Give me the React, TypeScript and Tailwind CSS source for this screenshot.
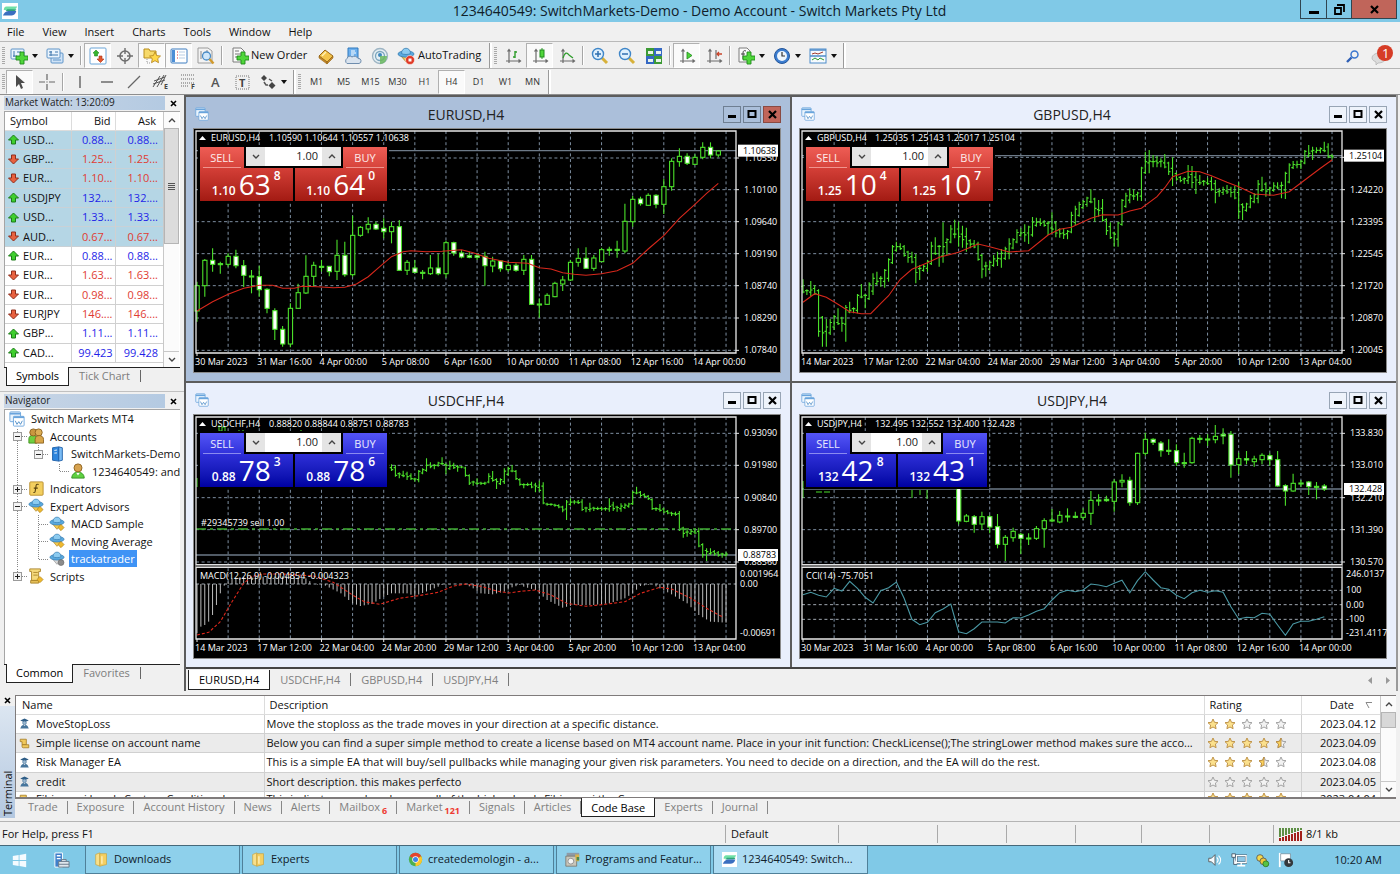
import { useState } from 'react'
import type { ReactNode } from 'react'

type Pt = [number, number]
// high, low, body top, body bottom, filled (1) or hollow (0)
type Candle = [number, number, number, number, number]

const STEP = 7.78
const LEFT = 4

const EURUSD_CANDLES: Candle[] = [
  [560, 680, 572, 648, 0], [492, 605, 496, 572, 0], [460, 530, 496, 508, 1], [500, 536, 506, 509, 1],
  [475, 515, 484, 508, 0], [464, 520, 484, 512, 1], [495, 576, 512, 541, 1], [525, 595, 543, 546, 1],
  [512, 605, 545, 584, 1], [580, 655, 583, 640, 1], [640, 735, 647, 703, 1], [693, 755, 703, 747, 1],
  [625, 757, 640, 747, 0], [566, 640, 593, 640, 0], [481, 597, 544, 594, 0], [500, 575, 511, 544, 0],
  [495, 530, 514, 517, 1], [513, 544, 514, 530, 1], [434, 555, 481, 529, 0], [440, 545, 481, 539, 1],
  [362, 545, 421, 539, 0], [393, 425, 397, 421, 0], [367, 415, 388, 402, 0], [380, 405, 388, 402, 1],
  [370, 430, 400, 410, 1], [380, 445, 395, 410, 0], [375, 527, 395, 526, 1], [495, 540, 502, 526, 0],
  [495, 535, 519, 532, 1], [525, 553, 532, 535, 1], [480, 540, 519, 536, 0], [477, 541, 519, 536, 1],
  [437, 548, 443, 536, 0], [440, 482, 443, 474, 1], [465, 490, 474, 486, 1], [470, 490, 482, 487, 1],
  [475, 495, 482, 487, 1], [470, 572, 484, 512, 1], [485, 532, 498, 513, 0], [495, 530, 498, 521, 1],
  [500, 530, 511, 524, 0], [505, 530, 511, 526, 1], [480, 540, 493, 526, 0], [480, 630, 493, 628, 1],
  [610, 668, 627, 630, 1], [595, 630, 601, 628, 0], [560, 607, 565, 605, 0], [543, 588, 555, 567, 0],
  [495, 558, 502, 555, 0], [460, 515, 490, 502, 0], [457, 522, 490, 520, 1], [480, 527, 489, 520, 0],
  [458, 500, 464, 500, 0], [455, 482, 463, 466, 1], [437, 488, 463, 466, 1], [326, 475, 379, 468, 0],
  [303, 395, 313, 380, 0], [305, 332, 312, 326, 1], [295, 332, 301, 331, 0], [298, 340, 301, 328, 1],
  [252, 357, 275, 328, 0], [190, 287, 199, 275, 0], [160, 215, 184, 200, 0], [175, 210, 184, 205, 1],
  [178, 210, 187, 208, 0], [142, 193, 157, 187, 0], [142, 190, 157, 180, 1], [165, 187, 168, 180, 0],
]

const EURUSD_MA: Pt[] = [
  [0, 648], [2, 620], [4, 598], [6, 580], [8, 571], [9.7, 571], [11, 580], [12.5, 580], [13.5, 574], [15.5, 575],
  [17.5, 578], [19, 577], [20.5, 567], [22, 545], [23.5, 515], [25, 485], [26.5, 470], [27.5, 467], [29.5, 470],
  [31.5, 469], [34, 464], [35.5, 473], [37.5, 490], [40, 502], [42.5, 505], [44, 518], [45.5, 522], [47, 533],
  [48.5, 538], [50, 541], [52, 536], [54, 527], [56, 505], [58, 462], [60, 422], [62, 370], [64, 328], [65.5, 295], [67, 265],
]

const GBPUSD_BARS: Pt[] = [
  [553, 595], [583, 600], [558, 603], [570, 600], [583, 725], [663, 755], [672, 755], [672, 720], [660, 705], [640, 690],
  [665, 710], [630, 740], [620, 655], [637, 655], [597, 655], [567, 610], [597, 640], [562, 615], [535, 600], [530, 570],
  [543, 575], [522, 578], [490, 560], [450, 507], [440, 470], [445, 465], [450, 485], [467, 503], [470, 505], [477, 565],
  [510, 555], [510, 530], [495, 530], [440, 510], [427, 480], [450, 515], [382, 503], [430, 480], [390, 445], [374, 430],
  [380, 455], [392, 458], [398, 470], [433, 460], [435, 460], [440, 497], [477, 550], [500, 545], [498, 527], [480, 515],
  [470, 513], [462, 518], [455, 495], [430, 493], [430, 463], [403, 445], [400, 425], [388, 440], [392, 447], [366, 425],
  [368, 395], [370, 393], [375, 395], [378, 420], [352, 415], [378, 427], [400, 428], [400, 432], [405, 433], [350, 415],
  [332, 390], [320, 365], [315, 342], [305, 335], [283, 325], [308, 380], [315, 365], [312, 380], [370, 420], [382, 432],
  [410, 455], [380, 455], [312, 392], [293, 338], [280, 325], [283, 315], [290, 317], [215, 318], [170, 237], [165, 235],
  [180, 217], [183, 217], [190, 217], [177, 220], [200, 240], [187, 273], [232, 257], [243, 262], [247, 267], [210, 267],
  [213, 280], [228, 297], [240, 270], [255, 272], [248, 270], [245, 287], [255, 325], [280, 305], [275, 300], [270, 297],
  [275, 307], [272, 313], [262, 372], [325, 375], [323, 350], [300, 340], [295, 325], [255, 325], [245, 290], [262, 305],
  [275, 302], [262, 290], [262, 283], [260, 310], [230, 312], [205, 265], [198, 222], [197, 220], [195, 222], [165, 208],
  [150, 187], [155, 195], [157, 175], [157, 175], [140, 172], [145, 190], [178, 193],
]

const GBPUSD_MA: Pt[] = [
  [0, 622], [3, 596], [6, 607], [9, 628], [12, 650], [15, 656], [17.4, 656], [20, 625], [22, 602], [25, 553], [28, 523],
  [32, 503], [35, 487], [40, 472], [45, 447], [48, 455], [53, 471], [58, 467], [63, 420], [66, 403], [69, 397],
  [74, 370], [77, 359], [81, 360], [84, 348], [87, 340], [91, 305], [93, 278], [95, 245], [99, 229], [102, 230],
  [105, 242], [109, 262], [112, 275], [116, 297], [121, 301], [125, 290], [129, 255], [133, 220], [136, 195],
]

// starts at bar 50, the earlier ones sit under the trade panel
const USDCHF_BARS: Pt[] = [
  [238, 258], [240, 275], [262, 280], [257, 277], [260, 285], [265, 285], [278, 290], [255, 292], [250, 268], [220, 260],
  [232, 250], [237, 253], [230, 245], [217, 240], [235, 268], [227, 255], [233, 252], [240, 260], [243, 250], [245, 275],
  [268, 300], [287, 302], [280, 300], [290, 300], [290, 300], [265, 295], [258, 290], [280, 312], [280, 300], [250, 297],
  [245, 272], [240, 262], [255, 285], [280, 302], [295, 310], [293, 303], [290, 310], [293, 322], [287, 320], [292, 358],
  [353, 362], [355, 362], [356, 365], [358, 370], [362, 382], [345, 405], [340, 362], [345, 358], [345, 357], [343, 378],
  [365, 382], [353, 380], [365, 378], [365, 375], [365, 377], [367, 377], [340, 380], [350, 378], [362, 380], [355, 380],
  [355, 372], [353, 368], [318, 360], [305, 328], [318, 337], [325, 338], [330, 345], [340, 375], [367, 378], [357, 380],
  [368, 385], [375, 388], [380, 393], [380, 392], [378, 438], [425, 458], [435, 455], [432, 450], [430, 448], [428, 487],
  [475, 518], [490, 528], [490, 510], [495, 512], [498, 515], [503, 518], [500, 515],
]

const MACD_HIST: Pt[] = [
  [0, 745], [1, 725], [2, 720], [3, 710], [4, 690], [5, 660], [6, 625], [7, 602], [8, 590], [9, 580], [12, 576], [24, 574],
  [28, 580], [30, 597], [33, 602], [37, 625], [40, 655], [42, 663], [45, 657], [48, 635], [50, 625], [54, 625], [56, 633],
  [60, 615], [63, 600], [66, 597], [69, 598], [71, 610], [73, 625], [76, 628], [79, 620], [81, 607], [83, 600], [84, 605],
  [87, 615], [90, 645], [94, 668], [97, 660], [102, 660], [106, 655], [110, 640], [112, 625], [114, 603], [117, 598],
  [119, 610], [122, 628], [126, 655], [129, 690], [132, 710], [136, 713],
]

const MACD_SIGNAL: Pt[] = [
  [0, 750], [3, 742], [6, 710], [9, 650], [12, 595], [14, 575], [17, 567], [22, 567], [30, 573], [35, 592], [40, 630],
  [43, 650], [47, 658], [52, 640], [57, 632], [62, 622], [66, 603], [69, 597], [73, 604], [77, 618], [80, 624], [84, 618],
  [87, 615], [91, 630], [95, 655], [100, 664], [105, 658], [110, 650], [114, 625], [119, 607], [122, 612], [127, 640],
  [131, 670], [135, 695],
]

// starts at candle 20
const USDJPY_CANDLES: Candle[] = [
  [300, 418, 300, 408, 1], [387, 412, 393, 409, 0], [390, 443, 395, 418, 1], [380, 435, 395, 417, 0], [390, 445, 395, 426, 1],
  [387, 490, 425, 478, 1], [450, 528, 457, 478, 0], [428, 470, 439, 458, 0], [443, 507, 448, 460, 1], [445, 480, 459, 462, 1],
  [423, 465, 431, 460, 0], [400, 488, 407, 431, 0], [372, 412, 405, 408, 1], [378, 415, 391, 411, 0], [370, 410, 393, 396, 1],
  [380, 400, 394, 397, 1], [370, 405, 385, 397, 0], [318, 420, 346, 385, 0], [328, 362, 345, 348, 1], [332, 350, 343, 347, 1],
  [283, 380, 291, 349, 0], [268, 307, 286, 291, 0], [275, 362, 286, 353, 1], [203, 360, 205, 353, 0], [143, 212, 163, 205, 0],
  [160, 180, 163, 172, 1], [168, 215, 174, 197, 1], [163, 210, 196, 199, 1], [178, 243, 197, 233, 1], [203, 248, 233, 236, 1],
  [155, 236, 160, 233, 0], [150, 175, 160, 163, 1], [148, 183, 162, 165, 1], [120, 175, 154, 164, 0], [130, 178, 148, 153, 1],
  [138, 278, 148, 240, 1], [203, 268, 221, 239, 0], [198, 238, 221, 225, 1], [212, 245, 222, 230, 0], [205, 238, 211, 224, 0],
  [205, 243, 212, 224, 1], [198, 305, 224, 303, 1], [298, 362, 302, 318, 1], [266, 320, 295, 318, 0], [285, 305, 294, 297, 1],
  [288, 330, 291, 305, 1], [291, 343, 304, 307, 1], [297, 318, 303, 312, 1],
]

const CCI = [
  629, 622, 631, 636, 610, 618, 589, 610, 637, 654, 617, 608, 591, 640, 703, 719, 712, 683, 672, 657, 740, 746, 731, 711,
  711, 711, 714, 698, 699, 690, 679, 671, 645, 623, 616, 620, 615, 597, 600, 605, 595, 586, 623, 587, 560, 585, 608, 613,
  631, 641, 623, 616, 622, 617, 622, 665, 702, 697, 698, 685, 688, 720, 751, 717, 709, 709, 703, 695,
]

const MAR30 = ['30 Mar 2023', '31 Mar 16:00', '4 Apr 00:00', '5 Apr 08:00', '6 Apr 16:00', '10 Apr 00:00', '11 Apr 08:00', '12 Apr 16:00', '14 Apr 00:00']
const MAR14 = ['14 Mar 2023', '17 Mar 12:00', '22 Mar 04:00', '24 Mar 20:00', '29 Mar 12:00', '3 Apr 04:00', '5 Apr 20:00', '10 Apr 12:00', '13 Apr 04:00']

const SYMBOLS: [string, string, string, boolean][] = [
  ['USD...', '0.88...', '0.88...', true],
  ['GBP...', '1.25...', '1.25...', false],
  ['EUR...', '1.10...', '1.10...', false],
  ['USDJPY', '132....', '132....', true],
  ['USD...', '1.33...', '1.33...', true],
  ['AUD...', '0.67...', '0.67...', false],
  ['EUR...', '0.88...', '0.88...', true],
  ['EUR...', '1.63...', '1.63...', false],
  ['EUR...', '0.98...', '0.98...', false],
  ['EURJPY', '146....', '146....', false],
  ['GBP...', '1.11...', '1.11...', true],
  ['CAD...', '99.423', '99.428', true],
]

const CODE_BASE: [string, string, number, string, 'ea' | 'script'][] = [
  ['MoveStopLoss', 'Move the stoploss as the trade moves in your direction at a specific distance.', 2, '2023.04.12', 'ea'],
  ['Simple license on account name', 'Below you can find a super simple method to create a license based on MT4 account name. Place in your init function: CheckLicense();The stringLower method makes sure the acco...', 4.5, '2023.04.09', 'script'],
  ['Risk Manager EA', 'This is a simple EA that will buy/sell pullbacks while managing your given risk parameters. You need to decide on a direction, and the EA will do the rest.', 3.5, '2023.04.08', 'ea'],
  ['credit', 'Short description. this makes perfecto', 0, '2023.04.05', 'ea'],
  ['Fibionacci Levels Custom Conditional', 'This indicator can show how small of the higher levels Fibionacci the Currency', 5, '2023.04.04', 'script'],
]

const inter = (pts: Pt[], i: number) => {
  for (let k = 1; k < pts.length; k++) {
    if (i <= pts[k][0]) {
      const [x0, y0] = pts[k - 1]
      const [x1, y1] = pts[k]
      return y0 + ((y1 - y0) * (i - x0)) / (x1 - x0)
    }
  }
  return pts[pts.length - 1][1]
}

const line = (pts: Pt[], step: number, off: number) =>
  pts.map(([i, v]) => `${(LEFT + i * step).toFixed(1)},${(v / 3 - off).toFixed(1)}`).join(' ')

/* ---------- icons ---------- */

function Svg({ s = 18, children, box = '0 0 18 18' }: { s?: number; children: ReactNode; box?: string }) {
  return (
    <svg width={s} height={s} viewBox={box} fill="none" aria-hidden="true" className="shrink-0">
      {children}
    </svg>
  )
}

const plus = (x: number, y: number) => (
  <path d={`M${x + 4} ${y}h4v4h4v4h-4v4h-4v-4h-4v-4h4z`} fill="#4fd63a" stroke="#1f8a1c" strokeWidth="0.9" />
)

const axes = <path d="M5 3v13M2 14h14M3.5 4.5L5 2.5l1.5 2M14.5 12.5l2 1.5-2 1.5" stroke="#6b6b6b" strokeWidth="1.2" />

const ufo = (
  <>
    <ellipse cx="9" cy="7" rx="8" ry="3.2" fill="#5aa9de" stroke="#2f76ab" strokeWidth="0.7" />
    <path d="M4.5 6.500C4.500-.5 13.500-.5 13.500 6.500c-2 1.300-7 1.300-9 0z" fill="#8ccbf0" stroke="#2f76ab" strokeWidth="0.7" />
  </>
)

const ICONS: Record<string, ReactNode> = {
  newChart: (
    <>
      <rect x="1" y="2" width="13" height="10" rx="1" fill="#eaf4fd" stroke="#5e94c8" />
      <path d="M4 4v6M3 9h4M7 5h4" stroke="#3f77ad" />
      {plus(6, 5)}
    </>
  ),
  profiles: (
    <>
      <rect x="5" y="6" width="12" height="10" rx="1" fill="#cfe3f7" stroke="#5e94c8" />
      <rect x="1" y="2" width="13" height="9" rx="1" fill="#eaf4fd" stroke="#5e94c8" />
      <path d="M3 8h9M5 4v5M3 5h3M9 5h3" stroke="#3f77ad" />
      <path d="M7 13h8" stroke="#5e94c8" />
    </>
  ),
  market: (
    <>
      <rect x="1" y="1" width="16" height="16" rx="1" fill="#fff" stroke="#6aa5d8" />
      <path d="M7 3l3 3-1.500.5V9h-3V6.500L4 6z" fill="#35b52c" stroke="#1f8a1c" strokeWidth="0.6" />
      <path d="M10 9h3v3h2l-3.500 3.500L8 12h2z" fill="#e2552b" stroke="#a8331b" strokeWidth="0.6" />
    </>
  ),
  data: (
    <>
      <circle cx="9" cy="9" r="5" stroke="#6d6d6d" strokeWidth="1.5" />
      <path d="M9 1v6M9 11v6M1 9h6M11 9h6" stroke="#6d6d6d" strokeWidth="1.4" />
    </>
  ),
  folderStar: (
    <>
      <path d="M1 2h5l1 2h6v7H1z" fill="#f7da6b" stroke="#b88d1c" />
      <path d="M4 12v4h4" stroke="#999" strokeDasharray="1 1" />
      <path d="M12 5l1.700 3.600 3.800.4-2.800 2.700.8 4-3.500-2-3.500 2 .8-4L6.500 9l3.800-.4z" fill="#ffd84a" stroke="#b3821a" strokeWidth="0.8" />
    </>
  ),
  navigator: (
    <>
      <rect x="1" y="2" width="16" height="14" rx="1" fill="#fff" stroke="#3c7cc0" />
      <path d="M2 3h3v12H2z" fill="#4c8ed6" />
      <path d="M7 5h1M7 8h1M7 11h1" stroke="#d33" />
      <path d="M9 5h6M9 8h6M9 11h6" stroke="#b8cde4" />
    </>
  ),
  tester: (
    <>
      <path d="M1 1h10l4 3v12H1z" fill="#f3f3f3" stroke="#9b9b9b" />
      <path d="M4 4v8M7 5v4M10 3v4" stroke="#888" />
      <circle cx="9.5" cy="9" r="4" fill="#cfe7fa" stroke="#4a8cc6" strokeWidth="1.3" />
      <path d="M12.500 12l4 4.500" stroke="#d19a2c" strokeWidth="2.4" />
    </>
  ),
  newOrder: (
    <>
      <path d="M2 1h8l3 3v11H2z" fill="#fafafa" stroke="#7d7d7d" />
      <path d="M4 4h4M4 7h6M4 10h4" stroke="#777" />
      {plus(6, 5)}
    </>
  ),
  gold: (
    <>
      <path d="M2 9l6-6 8 6-6 6z" fill="#f3c44b" stroke="#96661a" />
      <path d="M2 9l8 6v2L2 11zM10 15l6-6v2l-6 6z" fill="#c78a26" stroke="#96661a" strokeWidth="0.6" />
      <path d="M5 9l4-4" stroke="#fff1b8" strokeWidth="1.5" />
    </>
  ),
  vps: (
    <>
      <path d="M4 1h10v10H4z" fill="#6db0ee" stroke="#2f78bd" />
      <path d="M7 4h4M7 6h5M7 8h3" stroke="#fff" />
      <path d="M3 16.500a3 3 0 010-5 3 3 0 015-1.500 4 4 0 016 1.500 2.500 2.500 0 011 5z" fill="#d9e3ee" stroke="#6f8dad" />
    </>
  ),
  signals: (
    <>
      <circle cx="9" cy="9" r="7.5" fill="#e4eef3" stroke="#9db4c3" strokeWidth="1.3" />
      <circle cx="9" cy="9" r="4.5" stroke="#7ba5bd" strokeWidth="1.3" />
      <circle cx="9" cy="8" r="2" fill="#3f88bd" />
      <path d="M9 9v8c4 0 7-3 7-8z" fill="#6bb85e" opacity="0.85" />
    </>
  ),
  autoTrading: (
    <>
      <path d="M4 9l6 7 5-6z" fill="#f3c94f" stroke="#a87a1c" strokeWidth="0.7" />
      {ufo}
      <circle cx="13" cy="13" r="4.5" fill="#e03a26" stroke="#fff" strokeWidth="0.5" />
      <rect x="11.5" y="11.5" width="3" height="3" fill="#fff" />
    </>
  ),
  barChart: <>{axes}<path d="M11 4v7M9 10h2M11 5h2" stroke="#2e9c2b" strokeWidth="1.4" /></>,
  candles: <>{axes}<path d="M11 1v11" stroke="#2e9c2b" /><rect x="9" y="3" width="4" height="7" fill="#4fd63a" stroke="#1f8a1c" /></>,
  lineChart: <>{axes}<path d="M5 11c2-6 4-6 6-3l4 3" stroke="#2e9c2b" strokeWidth="1.2" /></>,
  zoomIn: (
    <>
      <path d="M11 11l5 5" stroke="#d7b13a" strokeWidth="3" />
      <circle cx="7" cy="7" r="5.5" fill="#dff0fd" stroke="#3f86c8" strokeWidth="1.4" />
      <path d="M7 4v6M4 7h6" stroke="#2f6fb0" strokeWidth="1.5" />
    </>
  ),
  zoomOut: (
    <>
      <path d="M11 11l5 5" stroke="#d7b13a" strokeWidth="3" />
      <circle cx="7" cy="7" r="5.5" fill="#dff0fd" stroke="#3f86c8" strokeWidth="1.4" />
      <path d="M4 7h6" stroke="#2f6fb0" strokeWidth="1.5" />
    </>
  ),
  tile: (
    <>
      <rect x="1" y="1" width="8" height="8" fill="#3c9a35" /><rect x="9" y="1" width="8" height="8" fill="#3568c4" />
      <rect x="1" y="9" width="8" height="8" fill="#3568c4" /><rect x="9" y="9" width="8" height="8" fill="#3c9a35" />
      <path d="M3 4h5v3H3zM11 4h5v3h-5zM3 12h5v3H3zM11 12h5v3h-5z" fill="#e9f3e9" />
    </>
  ),
  autoScroll: <>{axes}<path d="M9 5l5 3.500L9 12z" fill="#4fd63a" stroke="#1f8a1c" strokeWidth="0.8" /></>,
  chartShift: <>{axes}<path d="M11 3v9" stroke="#6b6b6b" strokeWidth="1.2" /><path d="M17 7h-5M14 5l-2 2 2 2" stroke="#c8442a" strokeWidth="1.3" /></>,
  indicators: (
    <>
      <path d="M2 1h8l3 3v11H2z" fill="#fafafa" stroke="#7d7d7d" />
      <path d="M9 4c-2-1-3 0-3 2v6M4 7h4" stroke="#444" />
      {plus(6, 5)}
    </>
  ),
  clock: (
    <>
      <circle cx="9" cy="9" r="7.5" fill="#3c7dd0" stroke="#24569a" />
      <circle cx="9" cy="9" r="5" fill="#eef5fc" />
      <path d="M9 5v4h3" stroke="#333" strokeWidth="1.2" />
    </>
  ),
  templates: (
    <>
      <rect x="1" y="2" width="16" height="14" fill="#f6fafe" stroke="#4d8cc9" />
      <path d="M1 3h16M1 9h16" stroke="#4d8cc9" strokeWidth="1.5" />
      <path d="M3 7l3-1 3 1 5-2" stroke="#a03a2a" />
      <path d="M3 13l3-2 3 2 2-2 4 2" stroke="#2e9c2b" />
    </>
  ),
  cursor: <path d="M5 2v12l3-3 2 5 2-1-2-5h4z" fill="#4b4b4b" />,
  cross: <path d="M9 1v6M9 11v6M1 9h6M11 9h6M9 8.500v1" stroke="#666" strokeWidth="1.2" />,
  vline: <path d="M9 3v12" stroke="#555" strokeWidth="1.3" />,
  hline: <path d="M3 9h12" stroke="#555" strokeWidth="1.3" />,
  trend: <path d="M3 15L15 3" stroke="#666" strokeWidth="1.3" />,
  channel: (
    <>
      <path d="M1 14L8 3M5 14L12 2M9 12l5-10M1 11l12-4M2 8l11-4" stroke="#555" />
      <text x="12" y="16" fontSize="7" fontWeight="700" fill="#444">E</text>
    </>
  ),
  fibo: (
    <>
      <path d="M2 2h14M2 6h14M2 10h14M2 13h8" stroke="#666" strokeDasharray="1 1" />
      <text x="12" y="16" fontSize="7" fontWeight="700" fill="#444">F</text>
    </>
  ),
  text: <text x="5" y="14" fontSize="13" fontWeight="600" fill="#555">A</text>,
  label: (
    <>
      <rect x="3" y="3" width="13" height="13" stroke="#777" strokeDasharray="1 1" />
      <text x="6" y="14" fontSize="11" fontWeight="700" fill="#444">T</text>
    </>
  ),
  arrows: (
    <>
      <path d="M5 2l3 3-3 3-3-3zM13 9l3.500 3.500L13 16l-3.500-3.500z" fill="#444" />
      <path d="M5 9l2 3h2M10 6l3 2" stroke="#555" strokeWidth="1.5" />
    </>
  ),
  chartWin: (
    <>
      <rect x="1" y="1" width="12" height="11" rx="1" fill="#eaf4fd" stroke="#69a4dc" />
      <path d="M1 3h12" stroke="#69a4dc" strokeWidth="2" />
      <rect x="5" y="6" width="12" height="11" rx="1" fill="#fff" stroke="#69a4dc" />
      <path d="M5 7h12" stroke="#69a4dc" strokeWidth="2" />
      <path d="M7 11l2 4 2-3 2 3 2-4" stroke="#4788c6" />
    </>
  ),
  accounts: (
    <>
      <path d="M1 17v-5c0-5 9-5 9 0v5z" fill="#6fcf3f" stroke="#3d8f1d" />
      <circle cx="6" cy="5" r="4" fill="#c9973f" stroke="#8a5f1b" />
      <circle cx="12" cy="5" r="4" fill="#dcae55" stroke="#8a5f1b" />
      <path d="M8 17v-4c0-6 9.500-6 9.500 0v4z" fill="#d8a548" stroke="#8a5f1b" />
    </>
  ),
  server: (
    <>
      <path d="M4 2l7-1v16l-7-1z" fill="#2f86dd" stroke="#1b5ea8" />
      <path d="M11 1l4 1v14l-4 1z" fill="#7bbcf5" stroke="#1b5ea8" />
      <path d="M6 5l3-.5M6 8l3-.2" stroke="#fff" />
    </>
  ),
  user: (
    <>
      <path d="M2 17c0-9 14-9 14 0z" fill="#5fd041" stroke="#2e8f1d" />
      <path d="M7 11h4l-2 3z" fill="#fff" />
      <circle cx="9" cy="5.5" r="4.5" fill="#d7a350" stroke="#8a5f1b" />
    </>
  ),
  fx: (
    <>
      <rect x="2" y="1" width="15" height="15" rx="1" fill="#f3cf5f" stroke="#b48a28" />
      <path d="M12 4c-2-1-3 0-3 2l-1 6c0 1-1 1-2 1M6.500 8h4.500" stroke="#5a430f" strokeWidth="1.2" />
    </>
  ),
  ea: (
    <>
      <path d="M4 9l5 6 5-6z" fill="#f3c94f" stroke="#a87a1c" strokeWidth="0.7" />
      {ufo}
      <path d="M13.500 9.500l3.500 3.500-3.500 3.500L10 13z" fill="#f0b92e" stroke="#a8801c" strokeWidth="0.7" />
    </>
  ),
  eaOff: (
    <>
      <path d="M4 9l5 6 5-6z" fill="#d8d8d8" stroke="#8a8a8a" strokeWidth="0.7" />
      {ufo}
      <circle cx="13.5" cy="13" r="3.3" fill="#8c8c8c" stroke="#666" strokeWidth="0.7" />
    </>
  ),
  scripts: (
    <>
      <path d="M2 1h12v3h-2v10H4V4H2z" fill="#f5d97b" stroke="#a98329" />
      <path d="M6 5h5M6 8h5" stroke="#a98329" />
      <path d="M3 14h9v3H3z" fill="#e5bf58" stroke="#a98329" />
      <path d="M13.500 9.500l3.500 3.500-3.500 3.500L10 13z" fill="#f0b92e" stroke="#a8801c" strokeWidth="0.7" />
    </>
  ),
  expertRow: (
    <>
      <path d="M2 4l7-3 7 3-7 3z" fill="#2f5d86" />
      <circle cx="9" cy="8" r="3" fill="#9db8cf" stroke="#3b6c96" />
      <path d="M2 17l2-4 3-2 2 2 2-2 3 2 2 4z" fill="#46759c" />
    </>
  ),
  scriptRow: (
    <>
      <path d="M2 2h10v9H5V6H2z" fill="#f0c95c" stroke="#a47a22" strokeWidth="1.3" />
      <path d="M5 11h11v5H7a2 2 0 01-2-2z" fill="#f0c95c" stroke="#a47a22" strokeWidth="1.3" />
    </>
  ),
  folder: (
    <>
      <path d="M2 3l5-2v16l-5-2z" fill="#f9e08a" stroke="#c9a23a" strokeWidth="0.8" />
      <path d="M7 2h8v13l-8 2z" fill="#f4cf62" stroke="#c9a23a" strokeWidth="0.8" />
      <path d="M9.500 5v9" stroke="#fff3c4" strokeWidth="1.5" />
    </>
  ),
  chrome: (
    <>
      <circle cx="9" cy="9" r="8" fill="#4caf50" />
      <path d="M9 9L2.100 5a8 8 0 0113.800 0z" fill="#e5432f" />
      <path d="M9 9l6.900-4A8 8 0 019 17z" fill="#fbc62d" />
      <circle cx="9" cy="9" r="3.8" fill="#fff" />
      <circle cx="9" cy="9" r="3" fill="#3f83ea" />
    </>
  ),
  programs: (
    <>
      <path d="M2 1h15v4H2z" fill="#8d9aa6" />
      <path d="M1 5h13v12H1z" fill="#c9c6ba" stroke="#77746b" />
      <circle cx="7" cy="11" r="3.5" fill="#f6f6f6" stroke="#888" />
      <path d="M12 3h5v8h-4z" fill="#d9b24a" />
      <path d="M14 6h3v4h-3z" fill="#4e8a4a" />
    </>
  ),
  logo: (
    <>
      <rect width="18" height="18" fill="#fff" />
      <path d="M5 4h12c-1 3-3 4-6 4H2c0-2 1-4 3-4z" fill="#6fe0a6" />
      <path d="M6 7h10c0 1-1 2-3 2H4z" fill="#2fa37a" />
      <path d="M7 9h9c-1 4-3 5-6 5H1c1-2 3-5 6-5z" fill="#3a6fc0" />
    </>
  ),
  windows: <path d="M1 3.500L8 2.500V8.500H1zM9 2.300L17 1v7.500H9zM1 9.500h7v6l-7-1zM9 9.500h8V17l-8-1.300z" fill="#f5fbff" />,
  serverManager: (
    <>
      <path d="M2 1h8v15H2z" fill="#3e7fcb" stroke="#fff" />
      <path d="M4 4h4M4 7h4" stroke="#fff" strokeWidth="1.5" />
      <path d="M6 10h11v6H6zM9 10V8h5v2M6 13h11" fill="#dfe7ee" stroke="#68798a" />
    </>
  ),
  volume: (
    <>
      <path d="M2 7h3l4-4v12l-4-4H2z" fill="#f6fbfe" stroke="#555" />
      <path d="M11 6c2 2 2 4 0 6M13 4c3 3 3 7 0 10" stroke="#fff" strokeWidth="1.3" />
    </>
  ),
  network: (
    <>
      <path d="M6 4h11v8H6z" fill="#8fc8e6" stroke="#46596a" strokeWidth="2.6" />
      <path d="M6 4h11v8H6zM7 15.500h9M11.500 12v3" stroke="#fff" strokeWidth="1.5" />
      <path d="M1 2h4v4H1zM3 6v8h4" fill="#fff" stroke="#46596a" />
    </>
  ),
  coins: (
    <>
      <circle cx="6" cy="6" r="4" fill="#f5d94b" stroke="#555" />
      <circle cx="10" cy="10" r="4" fill="#f0c83a" stroke="#555" />
      <circle cx="13" cy="13" r="3.500" fill="#57c244" stroke="#2c7a22" />
    </>
  ),
  flag: (
    <>
      <path d="M2 1v16" stroke="#fff" strokeWidth="2" />
      <path d="M3 2h11v8H3z" fill="#fff" stroke="#5e6d78" strokeWidth="0.6" />
      <circle cx="12" cy="12" r="5" fill="#33383c" />
      <path d="M12 9v3h2" stroke="#fff" strokeWidth="1.2" />
    </>
  ),
}

const Icon = ({ name, s }: { name: string; s?: number }) => <Svg s={s}>{ICONS[name]}</Svg>

const Caret = () => (
  <svg width="6" height="4" viewBox="0 0 6 4" aria-hidden="true" className="shrink-0">
    <path d="M0 0h6L3 4z" fill="#111" />
  </svg>
)

function CloseX() {
  return (
    <svg width="7" height="7" viewBox="0 0 7 7" aria-hidden="true">
      <path d="M1 1l5 5M6 1L1 6" stroke="#000" strokeWidth="1.6" />
    </svg>
  )
}

/* ---------- title, menu, toolbars ---------- */

function TitleBar() {
  return (
    <header className="flex h-[22px] items-start bg-[#80c9e7] pl-0.5 pr-[3px]">
      <div className="flex h-full w-[97px] items-center"><Icon name="logo" s={16} /></div>
      <h1 className="flex-1 text-center text-[14px] leading-[22px] text-[#10202a]">
        1234640549: SwitchMarkets-Demo - Demo Account - Switch Markets Pty Ltd
      </h1>
      <div className="flex h-[19px] border border-t-0 border-[#2f4550]">
        <button aria-label="Minimize" className="flex w-[26px] items-center justify-center border-r border-[#2f4550]">
          <svg width="10" height="10" viewBox="0 0 10 10"><path d="M0 7h10v3H0z" fill="#000" /></svg>
        </button>
        <button aria-label="Restore" className="flex w-[25px] items-center justify-center border-r border-[#2f4550]">
          <svg width="11" height="11" viewBox="0 0 11 11" fill="none">
            <path d="M3 1h7v7M1 4h6v6H1z" stroke="#000" strokeWidth="1.8" />
          </svg>
        </button>
        <button aria-label="Close" className="flex w-[44px] items-center justify-center bg-[#c0655a]">
          <svg width="9" height="9" viewBox="0 0 9 9"><path d="M1 1l7 7M8 1L1 8" stroke="#000" strokeWidth="2.2" /></svg>
        </button>
      </div>
    </header>
  )
}

function MenuBar() {
  return (
    <nav className="flex h-5 items-center gap-[18px] border-b border-[#b9b9b9] pl-[7px] text-[11px] leading-[18px]">
      {['File', 'View', 'Insert', 'Charts', 'Tools', 'Window', 'Help'].map(m => (
        <button key={m}>{m}</button>
      ))}
    </nav>
  )
}

const Grip = ({ first }: { first?: boolean }) => (
  <span className={first ? 'flex w-[6px] justify-center' : 'flex w-[7px] justify-center'}>
    <span className="my-1 w-[3px] bg-[repeating-linear-gradient(#a9a9a9_0_1px,#f0f0f0_1px_2px)]" />
  </span>
)
const Sep = () => <span className="mx-[2px] my-[3px] w-[2px] border-l border-[#a6a6a6] bg-white" />
const End = () => <span className="ml-[2px] w-[3px] border-l border-[#9a9a9a] bg-white" />

function Tool({ icon, pressed, drop }: { icon: string; pressed?: boolean; drop?: boolean }) {
  return (
    <button
      aria-label={icon}
      className={
        drop
          ? 'flex w-9 items-center gap-1 pl-1'
          : pressed
            ? 'flex w-[27px] items-center justify-center border border-[#b0b0b0] border-b-white border-r-white bg-[#fafafa]'
            : 'flex w-[27px] items-center justify-center'
      }
    >
      <Icon name={icon} />
      {drop && <Caret />}
    </button>
  )
}

function Toolbars() {
  const [frame, setFrame] = useState('H4')
  return (
    <div className="border-b border-[#8e8e8e]">
      <div className="flex justify-between border-b border-[#b4b4b4]">
        <div className="flex h-[26px] pt-px">
          <Grip first />
          <Tool icon="newChart" drop />
          <Tool icon="profiles" drop />
          <Sep />
          <Tool icon="market" pressed />
          <Tool icon="data" />
          <Tool icon="folderStar" pressed />
          <Tool icon="navigator" pressed />
          <Tool icon="tester" />
          <Sep />
          <button className="flex w-[87px] items-center gap-[2px] pl-[6px] text-[11px] whitespace-nowrap"><Icon name="newOrder" />New Order</button>
          <Tool icon="gold" />
          <Tool icon="vps" />
          <Tool icon="signals" />
          <button className="flex w-[94px] items-center gap-[3px] pl-1 text-[11px] whitespace-nowrap"><Icon name="autoTrading" />AutoTrading</button>
          <End />
          <Grip />
          <Tool icon="barChart" />
          <Tool icon="candles" pressed />
          <Tool icon="lineChart" />
          <Sep />
          <Tool icon="zoomIn" />
          <Tool icon="zoomOut" />
          <Tool icon="tile" />
          <Sep />
          <Tool icon="autoScroll" pressed />
          <Tool icon="chartShift" />
          <Sep />
          <Tool icon="indicators" drop />
          <Tool icon="clock" drop />
          <Tool icon="templates" drop />
          <End />
        </div>
        <div className="flex items-center gap-3 pr-[7px] pt-[2px]">
          <button aria-label="Search">
            <svg width="13" height="13" viewBox="0 0 13 13" fill="none">
              <circle cx="8.5" cy="4.5" r="3.5" stroke="#3b76cf" strokeWidth="1.5" />
              <path d="M5.500 7.500L1 12" stroke="#2f5fb5" strokeWidth="2.4" />
            </svg>
          </button>
          <button aria-label="Messages">
            <svg width="22" height="22" viewBox="0 0 22 22">
              <path d="M1 13a7 5 0 0114 0c0 3-4 5-8 5l-2 2v-3c-2-1-4-2-4-4z" fill="#dcdcdc" stroke="#b5b5b5" strokeWidth="0.8" />
              <circle cx="14" cy="8" r="8" fill="#d63c26" />
              <text x="11" y="13" fontSize="13" fill="#fff">1</text>
            </svg>
          </button>
        </div>
      </div>
      <div className="flex h-[25px] pt-px">
        <Grip first />
        <Tool icon="cursor" pressed />
        <Tool icon="cross" />
        <Sep />
        <Tool icon="vline" />
        <Tool icon="hline" />
        <Tool icon="trend" />
        <Tool icon="channel" />
        <Tool icon="fibo" />
        <Tool icon="text" />
        <Tool icon="label" />
        <Tool icon="arrows" drop />
        <End />
        <Grip />
        {['M1', 'M5', 'M15', 'M30', 'H1', 'H4', 'D1', 'W1', 'MN'].map(f => (
          <button
            key={f}
            onClick={() => setFrame(f)}
            className={
              f === frame
                ? 'w-[27px] border border-[#b0b0b0] border-b-white border-r-white bg-[#fafafa] text-[9px] text-[#333]'
                : 'w-[27px] text-[9px] text-[#333]'
            }
          >
            {f}
          </button>
        ))}
        <End />
      </div>
    </div>
  )
}

/* ---------- left column ---------- */

function PanelHead({ title }: { title: string }) {
  return (
    <div className="flex h-[14px] items-center justify-between">
      <h2 className="h-[14px] w-[161px] bg-linear-to-r from-[#c9d6e6] to-[#b4cae2] pl-px text-[10px] leading-[13px] text-[#222]">{title}</h2>
      <button aria-label={'Close ' + title} className="pr-[3px]"><CloseX /></button>
    </div>
  )
}

function Tabs({ items }: { items: string[] }) {
  return (
    <div className="flex h-[19px] border-t border-[#222] pl-[2px] text-[11px] text-[#7d7d7d]">
      <button className="-mt-px h-[19px] border border-t-0 border-[#222] bg-white px-[9px] leading-[18px] text-black">{items[0]}</button>
      <button className="mb-[4px] mt-[2px] border-r border-[#666] px-[10px] leading-[12px]">{items[1]}</button>
    </div>
  )
}

const Arrow = ({ up }: { up: boolean }) => (
  <svg width="11" height="11" viewBox="0 0 11 11" aria-hidden="true" className="shrink-0">
    {up ? (
      <path d="M5.500 1l5 5h-3v4h-4V6h-3z" fill="#3fcf2e" stroke="#1c7a18" />
    ) : (
      <path d="M3.500 1h4v4h3l-5 5-5-5h3z" fill="#e8613f" stroke="#8f2f1c" />
    )}
  </svg>
)

const Chevron = ({ down }: { down?: boolean }) => (
  <svg width="8" height="5" viewBox="0 0 8 5" fill="none" aria-hidden="true">
    <path d={down ? 'M1 1l3 3 3-3' : 'M1 4l3-3 3 3'} stroke="#444" strokeWidth="1.4" />
  </svg>
)

function MarketWatch() {
  return (
    <section className="h-[297px] border-b border-[#c0c0c0] pl-1 pr-1 pt-px">
      <PanelHead title="Market Watch: 13:20:09" />
      <div className="mt-px flex h-[256px] overflow-hidden border-l border-t border-[#a5a5a5] bg-white">
        <div className="min-w-0 flex-1">
          <table className="h-[251px] w-full table-fixed border-collapse text-[11px] leading-[14px]">
            <thead>
              <tr className="h-[18px] border-b border-[#dcdcdc]">
                <th className="w-[66px] border-r border-[#dcdcdc] pl-[5px] text-left font-normal">Symbol</th>
                <th className="w-[44px] border-r border-[#dcdcdc] pr-1 text-right font-normal">Bid</th>
                <th className="pr-[7px] text-right font-normal">Ask</th>
              </tr>
            </thead>
            <tbody>
              {SYMBOLS.map(([sym, bid, ask, up], i) => (
                <tr key={i} className={i < 6 ? 'h-[19px] border-b border-[#c9d1d6] bg-[#b5d6e5]' : 'h-[19px] border-b border-[#d0d0d0]'}>
                  <td className="border-r border-[#d0d0d0] pl-[3px]">
                    <span className="flex items-center gap-1"><Arrow up={up} />{sym}</span>
                  </td>
                  <td className={up ? 'border-r border-[#d0d0d0] pr-[2px] text-right text-[#1f1fe8]' : 'border-r border-[#d0d0d0] pr-[2px] text-right text-[#e03c32]'}>{bid}</td>
                  <td className={up ? 'pr-[5px] text-right text-[#1f1fe8]' : 'pr-[5px] text-right text-[#e03c32]'}>{ask}</td>
                </tr>
              ))}
            </tbody>
          </table>
        </div>
        <div className="mr-px flex w-4 flex-col border-l border-[#c8c8c8] bg-[#fbfbfb]">
          <button aria-label="Scroll up" className="flex h-4 items-center justify-center"><Chevron /></button>
          <div className="flex h-[116px] items-center justify-center border border-[#b5b5b5] bg-[#dcdcdc]">
            <span className="h-[7px] w-[7px] bg-[repeating-linear-gradient(#555_0_1px,#dcdcdc_1px_2px)]" />
          </div>
          <button aria-label="Scroll down" className="mt-auto flex h-4 items-center justify-center border-t border-[#c8c8c8]"><Chevron down /></button>
        </div>
      </div>
      <Tabs items={['Symbols', 'Tick Chart']} />
    </section>
  )
}

type Guide = 'line' | 'tee' | 'end' | 'plus' | 'minus' | 'minusEnd' | 'plusEnd' | 'none'

const TREE: { label: string; icon: string; guides: Guide[]; on?: boolean }[] = [
  { label: 'Switch Markets MT4', icon: 'chartWin', guides: [] },
  { label: 'Accounts', icon: 'accounts', guides: ['minus'] },
  { label: 'SwitchMarkets-Demo', icon: 'server', guides: ['line', 'minusEnd'] },
  { label: '1234640549: andrew', icon: 'user', guides: ['line', 'none', 'end'] },
  { label: 'Indicators', icon: 'fx', guides: ['plus'] },
  { label: 'Expert Advisors', icon: 'ea', guides: ['minus'] },
  { label: 'MACD Sample', icon: 'ea', guides: ['line', 'tee'] },
  { label: 'Moving Average', icon: 'ea', guides: ['line', 'tee'] },
  { label: 'trackatrader', icon: 'eaOff', guides: ['line', 'end'], on: true },
  { label: 'Scripts', icon: 'scripts', guides: ['plusEnd'] },
]

function GuideCell({ kind }: { kind: Guide }) {
  const last = kind === 'end' || kind === 'minusEnd' || kind === 'plusEnd'
  const boxed = kind.startsWith('plus') || kind.startsWith('minus')
  return (
    <svg width="21" height="18" viewBox="0 0 21 18" fill="none" aria-hidden="true" className="shrink-0">
      {kind !== 'none' && <path d={last ? 'M10.500 0v9' : 'M10.500 0v18'} stroke="#888" strokeDasharray="1 1" />}
      {kind !== 'none' && kind !== 'line' && <path d="M11 9.500h9" stroke="#888" strokeDasharray="1 1" />}
      {boxed && (
        <>
          <rect x="6.5" y="5.5" width="8" height="8" fill="#f4f4f4" stroke="#9a9a9a" />
          <path d={kind.startsWith('plus') ? 'M8 9.500h5M10.500 7v5' : 'M8 9.500h5'} stroke="#222" />
        </>
      )}
    </svg>
  )
}

function Navigator() {
  return (
    <section className="h-[299px] pl-1 pr-1 pt-[2px]">
      <PanelHead title="Navigator" />
      <div className="mt-px h-[255px] overflow-hidden border-l border-t border-[#a5a5a5] bg-white">
        <ul className="grid h-[175px] grid-rows-10 text-[11px] leading-[17px]">
          {TREE.map(n => (
            <li key={n.label} className={n.guides.length ? 'flex items-center overflow-hidden pl-[2px]' : 'flex items-center pl-1'}>
              {n.guides.map((g, i) => <GuideCell key={i} kind={g} />)}
              <Icon name={n.icon} s={16} />
              <span className={n.on ? 'ml-1 bg-[#3f93f5] px-[2px] text-white' : 'ml-[6px] whitespace-nowrap'}>{n.label}</span>
            </li>
          ))}
        </ul>
      </div>
      <Tabs items={['Common', 'Favorites']} />
    </section>
  )
}

/* ---------- charts ---------- */

function Candles({ data, start = 0, off }: { data: Candle[]; start?: number; off: number }) {
  return (
    <g stroke="#4be02a">
      {data.map(([hi, lo, top, bot, fill], k) => {
        const x = LEFT + (start + k) * STEP
        return (
          <g key={k}>
            <path d={`M${x.toFixed(1)} ${hi / 3 - off}V${lo / 3 - off}`} strokeWidth="1.1" />
            <rect
              x={x - 2}
              y={top / 3 - off}
              width="4.2"
              height={Math.max((bot - top) / 3, 0.8)}
              fill={fill ? '#fff' : '#000'}
              strokeWidth="1.1"
            />
          </g>
        )
      })}
    </g>
  )
}

function Bars({ data, start = 0, off }: { data: Pt[]; start?: number; off: number }) {
  const mid = (k: number) => {
    const b = data[Math.min(Math.max(k, 0), data.length - 1)]
    return (b[0] + b[1]) / 2
  }
  const d = data
    .map(([hi, lo], k) => {
      const x = LEFT + ((start + k) * STEP) / 2
      const clamp = (v: number) => Math.min(Math.max(v, hi + 4), lo - 4) / 3 - off
      return `M${x} ${hi / 3 - off}V${lo / 3 - off}M${x - 1.8} ${clamp(mid(k - 1))}H${x}M${x} ${clamp(mid(k + 1))}h1.8`
    })
    .join('')
  return <path d={d} stroke="#4be02a" strokeWidth="1.1" fill="none" />
}

interface ChartProps {
  name: string
  quote: string
  axis: [string, number][]
  dates: string[]
  price: [string, number]
  off: number
  split?: boolean
  children: ReactNode
}

function Chart({ name, quote, axis, dates, price, off, split, children }: ChartProps) {
  const grid = Array.from({ length: 17 }, (_, i) => LEFT + (i + 1) * STEP * 4)
  const bottom = 225
  const levels = axis.filter(a => a[1] < 540 || !split)
  return (
    <svg viewBox="0 0 588 245" className="block w-full bg-black" fontFamily="'Open Sans', 'Noto Sans', sans-serif" fontSize="9" fontWeight="500" fill="none" role="img" aria-label={name + ' chart'}>
      <rect x="0.5" y="0.5" width="587" height="244" stroke="#8a8a8a" />
      <g stroke="#7d8ea0" strokeDasharray="3 2.6">
        {grid.map(x => <path key={x} d={`M${x} 3V${bottom}`} />)}
        {levels.map(([t, y]) => <path key={t} d={`M3 ${y / 3 - off}H543`} />)}
      </g>
      <path d={`M3 ${price[1] / 3 - off}H543`} stroke="#6d7a88" strokeWidth="1.3" />
      {children}
      <path d={`M3 ${bottom}V3H543V${bottom}z`} stroke="#e8e8e8" strokeWidth="1.3" />
      {split && <path d="M3 150.500H543M3 153.500H543" stroke="#e0e0e0" />}
      {split && <path d="M2 152h542" stroke="#777" strokeWidth="2" />}
      <path d={dates.map((_, i) => `M${LEFT + i * STEP * 8} ${bottom}v3`).join('')} stroke="#e8e8e8" />
      <g fill="#fff">
        {axis.map(([t, y]) => t && <text key={t} x={y > 540 && split ? 547 : 551} y={y / 3 - off + 3}>{t}</text>)}
        {dates.map((d, i) => <text key={d} x={2 + i * STEP * 8} y="237">{d}</text>)}
        <path d="M6 12l3.500-4 3.500 4z" />
        <text x="18" y="13">{name}</text>
        <text x="76" y="13">{quote}</text>
      </g>
      {levels.map(([t, y]) => <path key={t} d={`M543 ${y / 3 - off}h3`} stroke="#e8e8e8" />)}
      <rect x="545" y={price[1] / 3 - off - 6} width="40" height="12" fill="#fff" />
      <text x="550" y={price[1] / 3 - off + 3} fill="#000">{price[0]}</text>
    </svg>
  )
}

interface Deal { whole: string; sell: [string, string]; buy: [string, string]; blue?: boolean; narrow?: boolean }

function TradePanel({ id, whole, sell, buy, blue, narrow }: Deal & { id: string }) {
  const [lots, setLots] = useState('1.00')
  const bump = (d: number) => setLots(v => Math.max(0.01, Number(v) + d).toFixed(2))
  const top = blue ? 'bg-linear-to-b from-[#5454f6] to-[#3030da]' : 'bg-linear-to-b from-[#ee5d55] to-[#d6433b]'
  const low = blue ? 'bg-linear-to-b from-[#2e2ed8] to-[#0000a2]' : 'bg-linear-to-b from-[#d43f37] to-[#a31a12]'
  const rule = blue ? 'mx-[3px] block border-b border-[#8a8af0] leading-[19px]' : 'mx-[3px] block border-b border-[#f0948e] leading-[19px]'
  const price = ([big, sup]: [string, string]) => (
    <span className={'flex h-[33px] flex-1 justify-center gap-[3px] text-white ' + low}>
      <span className="pt-[13px] text-[12px] leading-[20px] font-semibold">{whole}</span>
      <span className="text-[28px] leading-[32px]">{big}</span>
      <span className="text-[12px] leading-[16px] font-semibold">{sup}</span>
    </span>
  )
  return (
    <div className={narrow ? 'absolute left-[5px] top-[17px] w-[185px] bg-black p-[2px]' : 'absolute left-[5px] top-[17px] w-[191px] bg-black p-[2px]'}>
      <div className="flex text-[11px]">
        <button className={'h-[21px] w-[44px] text-white/90 ' + top}><span className={rule}>SELL</span></button>
        <div className="mx-[2px] flex h-[19px] flex-1 bg-[#e4e4e4]">
          <button aria-label="Less" onClick={() => bump(-0.01)} className="flex w-[19px] items-center justify-center"><Chevron down /></button>
          <input
            aria-label={id + ' volume'}
            value={lots}
            onChange={e => setLots(e.target.value)}
            className="w-0 min-w-0 flex-1 bg-white pr-1 text-right text-[11px] text-[#222] outline-none"
          />
          <button aria-label="More" onClick={() => bump(0.01)} className="flex w-[19px] items-center justify-center"><Chevron /></button>
        </div>
        <button className={'h-[21px] w-[44px] text-white/90 ' + top}><span className={rule}>BUY</span></button>
      </div>
      <div className="flex gap-[2px]">
        {price(sell)}
        {price(buy)}
      </div>
    </div>
  )
}

function ChartWindow({ title, active, deal, children }: { title: string; active?: boolean; deal: Deal; children: ReactNode }) {
  const btn = active ? 'flex h-[17px] w-[18px] items-center justify-center border border-[#6f7f92]' : 'flex h-[17px] w-[18px] items-center justify-center border border-[#98a5b5] bg-[#eef3fb]'
  return (
    <section className={active ? 'bg-[#abbfda] pb-2 pl-[7px] pr-[9px]' : 'bg-[#e9effc] pb-2 pl-[7px] pr-[9px]'}>
      <div className="flex h-[31px] items-center pt-[3px] pl-[2px]">
        <Icon name="chartWin" s={14} />
        <h3 className="flex-1 pt-px text-center text-[14px] text-[#222]">{title}</h3>
        <div className="flex gap-[2px]">
          <button aria-label="Minimize" className={btn}>
            <svg width="10" height="10" viewBox="0 0 10 10"><path d="M1 6h8v3H1z" fill="#000" /></svg>
          </button>
          <button aria-label="Maximize" className={btn}>
            <svg width="10" height="10" viewBox="0 0 10 10" fill="none"><path d="M1.500 2h7v6h-7z" stroke="#000" strokeWidth="2" /></svg>
          </button>
          <button aria-label="Close" className={active ? 'flex h-[17px] w-[18px] items-center justify-center border border-[#8a4a42] bg-[#c0655a]' : btn}>
            <svg width="9" height="9" viewBox="0 0 9 9"><path d="M1 1l7 7M8 1L1 8" stroke="#000" strokeWidth="2.2" /></svg>
          </button>
        </div>
      </div>
      <div className="relative">
        {children}
        <TradePanel id={title} {...deal} />
      </div>
    </section>
  )
}

function Workspace() {
  const level = (v: number, off: number) => v / 3 - off
  return (
    <div className="grid grid-cols-2 gap-[2px] border-t-2 border-[#5c5c5c] bg-[#5c5c5c]">
      <ChartWindow title="EURUSD,H4" active deal={{ whole: '1.10', sell: ['63', '8'], buy: ['64', '0'] }}>
        <Chart
          name="EURUSD,H4" quote="1.10590 1.10644 1.10557 1.10638" dates={MAR30} price={['1.10638', 167]} off={33}
          axis={[['1.10550', 189], ['1.10100', 284], ['1.09640', 380], ['1.09190', 476], ['1.08740', 572], ['1.08290', 669], ['1.07840', 766]]}
        >
          <Candles data={EURUSD_CANDLES} off={33} />
          <polyline points={line(EURUSD_MA, STEP, 33)} stroke="#d8281c" strokeWidth="1.1" />
        </Chart>
      </ChartWindow>
      <ChartWindow title="GBPUSD,H4" deal={{ whole: '1.25', sell: ['10', '4'], buy: ['10', '7'] }}>
        <Chart
          name="GBPUSD,H4" quote="1.25035 1.25143 1.25017 1.25104" dates={MAR14} price={['1.25104', 182]} off={33}
          axis={[['', 187], ['1.24220', 284], ['1.23395', 380], ['1.22545', 476], ['1.21720', 572], ['1.20870', 669], ['1.20045', 766]]}
        >
          <Bars data={GBPUSD_BARS} off={33} />
          <polyline points={line(GBPUSD_MA, STEP / 2, 33)} stroke="#d8281c" strokeWidth="1.1" />
        </Chart>
      </ChartWindow>
      <ChartWindow title="USDCHF,H4" deal={{ whole: '0.88', sell: ['78', '3'], buy: ['78', '6'], blue: true }}>
        <Chart
          name="USDCHF,H4" quote="0.88820 0.88844 0.88751 0.88783" dates={MAR14} price={['0.88783', 510]} off={29} split
          axis={[['0.93090', 145], ['0.91980', 241], ['0.90840', 338], ['0.89700', 434], ['0.88560', 531], ['0.001964', 566], ['0.00', 598], ['-0.00691', 744]]}
        >
          <Bars data={USDCHF_BARS} start={50} off={29} />
          <path d="M4 64v9M26 11v6h3v-4h3v4M46 16v3M50 16v2M108 16v2" stroke="#4be02a" />
          <path d="M3 115H543" stroke="#3fae32" strokeWidth="1.4" strokeDasharray="10 4 3 4" />
          <text x="8" y="112" fill="#fff">#29345739 sell 1.00</text>
          <path
            d={Array.from({ length: 137 }, (_, i) => `M${LEFT + (i * STEP) / 2} 170V${inter(MACD_HIST, i) / 3 - 29}`).join('')}
            stroke="#bdbdbd"
          />
          <path d="M3 170H543" stroke="#a0a8b0" strokeDasharray="3 2.6" />
          <polyline points={line(MACD_SIGNAL, STEP / 2, 29)} stroke="#e0281c" strokeWidth="1.1" strokeDasharray="3 2" />
          <text x="7" y="165" fill="#fff">MACD(12,26,9) -0.004854 -0.004323</text>
        </Chart>
      </ChartWindow>
      <ChartWindow title="USDJPY,H4" deal={{ whole: '132', sell: ['42', '8'], buy: ['43', '1'], blue: true, narrow: true }}>
        <Chart
          name="USDJPY,H4" quote="132.495 132.552 132.400 132.428" dates={MAR30} price={['132.428', 312]} off={29} split
          axis={[['133.830', 145], ['133.010', 241], ['132.210', 338], ['131.390', 434], ['130.570', 531], ['246.0137', 566], ['100', 616], ['0.00', 659], ['-100', 703], ['-231.4117', 744]]}
        >
          <Candles data={USDJPY_CANDLES} start={20} off={29} />
          <path d="M4 67v17M17 78h6M25 78h6M113 76v8M121 76v5M128 76v9" stroke="#4be02a" />
          <path d={`M3 ${level(616, 29)}H543M3 ${level(659, 29)}H543M3 ${level(703, 29)}H543`} stroke="#a0a8b0" strokeDasharray="3 2.6" />
          <polyline points={line(CCI.map((v, i): Pt => [i, v]), STEP, 29)} stroke="#4a98a4" strokeWidth="1.1" />
          <text x="7" y="165" fill="#fff">CCI(14) -75.7051</text>
        </Chart>
      </ChartWindow>
    </div>
  )
}

function ChartTabs() {
  return (
    <div className="flex h-6 items-start border-t-2 border-[#444] pl-[2px] pt-px text-[11px] text-[#808080]">
      <button className="h-[20px] border border-t-0 border-[#222] bg-white px-[10px] leading-[19px] text-black">EURUSD,H4</button>
      {['USDCHF,H4', 'GBPUSD,H4', 'USDJPY,H4'].map(t => (
        <button key={t} className="my-[3px] border-r border-[#777] px-[10px] leading-[13px]">{t}</button>
      ))}
      <div className="ml-auto flex gap-[14px] self-center pr-[6px]">
        <button aria-label="Previous tab"><svg width="4" height="7" viewBox="0 0 4 7"><path d="M4 0v7L0 3.500z" fill="#999" /></svg></button>
        <button aria-label="Next tab"><svg width="4" height="7" viewBox="0 0 4 7"><path d="M0 0v7l4-3.500z" fill="#999" /></svg></button>
      </div>
    </div>
  )
}

/* ---------- terminal ---------- */

const STAR = 'M6 1l1.500 3.300 3.500.4-2.600 2.400.7 3.600L6 9l-3.100 1.700.7-3.600L1 4.700l3.500-.4z'

function Rating({ value }: { value: number }) {
  return (
    <span className="flex gap-[5px]" aria-label={value + ' of 5'}>
      {[0, 1, 2, 3, 4].map(i => (
        <svg key={i} width="12" height="12" viewBox="0 0 12 12" aria-hidden="true" className="shrink-0">
          <path d={STAR} fill={value >= i + 1 ? '#fbe08c' : '#f2f2f2'} stroke={value >= i + 1 ? '#b98a3c' : '#9a9a9a'} strokeWidth="0.9" />
          {value === i + 0.5 && <path d="M6 1L4.500 4.300 1 4.700l2.600 2.400-.7 3.600L6 9z" fill="#fbd25c" stroke="#b98a3c" strokeWidth="0.9" />}
        </svg>
      ))}
    </span>
  )
}

const TABS: [string, string?][] = [
  ['Trade'], ['Exposure'], ['Account History'], ['News'], ['Alerts'], ['Mailbox', '6'], ['Market', '121'],
  ['Signals'], ['Articles'], ['Code Base'], ['Experts'], ['Journal'],
]

function Terminal() {
  const [tab, setTab] = useState('Code Base')
  return (
    <section className="flex h-[131px] border-b border-[#b4b4b4] pt-1">
      <div className="flex w-[15px] flex-col items-center">
        <button aria-label="Close terminal" className="flex h-[11px] items-center"><CloseX /></button>
        <h2 className="mb-[3px] w-[15px] flex-1 rotate-180 bg-linear-to-t from-[#dce6f1] to-[#b4c8e0] pt-[2px] text-left text-[11px] leading-[15px] [writing-mode:vertical-rl]">Terminal</h2>
      </div>
      <div className="min-w-0 flex-1 pr-1">
        <div className="flex h-[104px] overflow-hidden border-b-2 border-l border-t border-[#7f7b7b] bg-white">
          <div className="min-w-0 flex-1">
            <table className="h-[115px] w-full table-fixed border-collapse text-[11px] leading-[14px]">
              <thead>
                <tr className="h-[18px] border-b border-[#dcdcdc]">
                  <th className="w-[248px] border-r border-[#dcdcdc] pl-[6px] text-left font-normal">Name</th>
                  <th className="border-r border-[#dcdcdc] pl-[5px] text-left font-normal">Description</th>
                  <th className="w-[97px] border-r border-[#dcdcdc] pl-[5px] text-left font-normal">Rating</th>
                  <th className="w-[79px] pr-2 font-normal">
                    <span className="flex items-center justify-end gap-[11px]">
                      Date
                      <svg width="7" height="6" viewBox="0 0 7 6" fill="none"><path d="M7 .5H1L4 6" stroke="#888" /></svg>
                    </span>
                  </th>
                </tr>
              </thead>
              <tbody>
                {CODE_BASE.map(([name, desc, rate, date, kind], i) => (
                  <tr
                    key={name}
                    className={
                      i === CODE_BASE.length - 1
                        ? 'h-[19px] align-top'
                        : i % 2
                          ? 'h-[19px] border-b border-[#d0d0d0] bg-[#ebebeb]'
                          : 'h-[19px] border-b border-[#d0d0d0]'
                    }
                  >
                    <td className="border-r border-[#d0d0d0] pl-[3px]">
                      <span className="flex items-center gap-[6px]"><Icon name={kind === 'ea' ? 'expertRow' : 'scriptRow'} s={11} />{name}</span>
                    </td>
                    <td className="truncate border-r border-[#d0d0d0] pl-[2px]">{desc}</td>
                    <td className="border-r border-[#d0d0d0] pl-[2px]"><Rating value={rate} /></td>
                    <td className="pr-1 text-right">{date}</td>
                  </tr>
                ))}
              </tbody>
            </table>
          </div>
          <div className="flex w-4 flex-col border-l border-[#c8c8c8] bg-[#fbfbfb]">
            <button aria-label="Scroll up" className="flex h-4 items-center justify-center"><Chevron /></button>
            <div className="h-4 border border-[#b5b5b5] bg-[#d8d8d8]" />
            <button aria-label="Scroll down" className="mt-auto flex h-4 items-center justify-center border-t border-[#c8c8c8]"><Chevron down /></button>
          </div>
        </div>
        <div className="flex items-start pl-1 text-[11px] text-[#808080]">
          {TABS.map(([t, n]) => (
            <button
              key={t}
              onClick={() => setTab(t)}
              className={
                t === tab
                  ? '-mt-px h-[19px] border border-t-0 border-[#222] bg-white px-[9px] leading-[17px] text-black'
                  : 'my-[2px] flex h-[13px] border-r border-[#888] px-[9px] leading-[12px]'
              }
            >
              {t}
              {n && <span className="pt-1 pl-[2px] text-[9px] font-bold text-[#ee3b33]">{n}</span>}
            </button>
          ))}
        </div>
      </div>
    </section>
  )
}

function StatusBar() {
  return (
    <div className="flex h-[23px] items-center pt-px text-[11px] leading-[18px]">
      <span className="min-w-0 flex-1 pl-[2px]">For Help, press F1</span>
      <span className="w-[113px] border-l border-[#aaa] pl-[5px]">Default</span>
      <span className="h-[18px] w-[99px] border-l border-[#aaa]" />
      <span className="h-[18px] w-[69px] border-l border-[#aaa]" />
      <span className="h-[18px] w-[69px] border-l border-[#aaa]" />
      <span className="h-[18px] w-[66px] border-l border-[#aaa]" />
      <span className="h-[18px] w-[68px] border-l border-[#aaa]" />
      <span className="h-[18px] w-[64px] border-l border-[#aaa]" />
      <span className="flex w-[127px] items-center gap-1 border-l border-[#aaa] pl-[5px]">
        <svg width="23" height="13" viewBox="0 0 23 13" aria-hidden="true">
          {[0, 1, 2, 3, 4, 5, 6, 7].map(i => (
            <g key={i}>
              <rect x={i * 3} y="0" width="2" height={9 - i} fill="#5d8f45" />
              <rect x={i * 3} y={10 - i} width="2" height={3 + i} fill="#a3201b" />
            </g>
          ))}
        </svg>
        8/1 kb
      </span>
    </div>
  )
}

const TASKS = [
  ['folder', 'Downloads'],
  ['folder', 'Experts'],
  ['chrome', 'createdemologin - a...'],
  ['programs', 'Programs and Featur...'],
  ['logo', '1234640549: Switch...'],
]

function Taskbar() {
  return (
    <footer className="flex h-[29px] items-stretch border-t border-[#46697a] bg-[#80c9e7] text-[11px] text-[#10202a]">
      <button aria-label="Start" className="flex w-[38px] items-center justify-center"><Icon name="windows" s={15} /></button>
      <button aria-label="Server Manager" className="flex w-[47px] items-center justify-center"><Icon name="serverManager" s={17} /></button>
      <div className="flex gap-[2px]">
        {TASKS.map(([icon, label], i) => (
          <button
            key={label}
            className={
              i === 4
                ? 'flex w-[155px] items-center gap-[5px] border border-t-0 border-[#4f8099] bg-[#addcf3] pl-2 whitespace-nowrap'
                : 'flex w-[155px] items-center gap-[5px] border border-t-0 border-[#4f8099] bg-[#8ed0eb] pl-2 whitespace-nowrap'
            }
          >
            <Icon name={icon} s={15} />
            {label}
          </button>
        ))}
      </div>
      <div className="ml-auto flex items-center gap-2 pr-[18px]">
        <Icon name="volume" s={16} />
        <Icon name="network" s={16} />
        <Icon name="coins" s={15} />
        <Icon name="flag" s={16} />
        <time className="w-20 text-right">10:20 AM</time>
      </div>
    </footer>
  )
}

export default function App() {
  return (
    <div className="flex min-h-screen flex-col bg-[#f0f0f0] font-['Open_Sans','Noto_Sans',sans-serif] text-[#111]">
      <TitleBar />
      <MenuBar />
      <Toolbars />
      <main className="flex">
        <aside className="w-[184px] shrink-0">
          <MarketWatch />
          <Navigator />
        </aside>
        <div className="mr-[2px] min-w-0 flex-1 border-x-2 border-[#5c5c5c] border-r-[#9a9a9a]">
          <Workspace />
          <ChartTabs />
        </div>
      </main>
      <Terminal />
      <StatusBar />
      <Taskbar />
    </div>
  )
}
